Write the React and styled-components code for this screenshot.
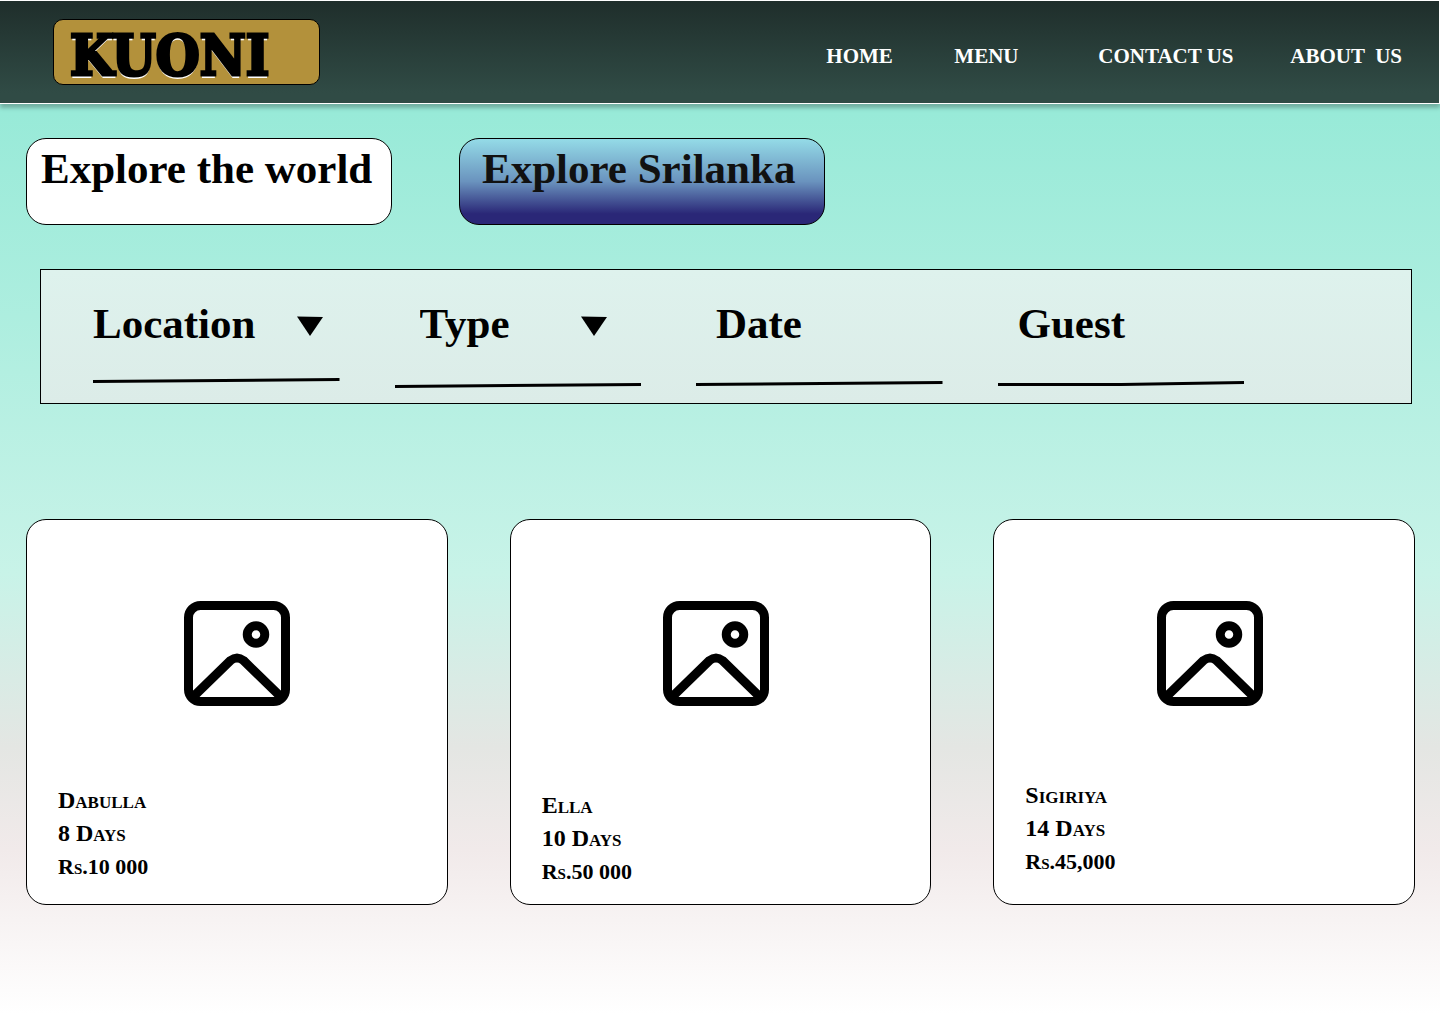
import React from "react";
import styled, { createGlobalStyle } from "styled-components";

const GlobalStyle = createGlobalStyle`
  *, *::before, *::after { box-sizing: border-box; }
  body {
    margin: 0;
    font-family: "Liberation Serif", serif;
    color: #000;
  }
`;

const Page = styled.div`
  min-height: 100vh;
  background: linear-gradient(
    180deg,
    #8fe9d5 0%,
    #98ead8 11%,
    #c8f3e8 56%,
    #e4e6e3 73%,
    #f1eaea 83%,
    #ffffff 99%
  );
`;

const Header = styled.header`
  display: flex;
  align-items: center;
  justify-content: space-between;
  height: 104px;
  padding: 2px 37px 0 53px;
  border: solid #fff;
  border-width: 1px 1px 1px 0;
  background: linear-gradient(180deg, #1f2e2b 0%, #304b45 90%);
  box-shadow: 0 4px 4px rgba(0, 0, 0, 0.25);
`;

const Logo = styled.a`
  display: flex;
  align-items: center;
  width: 267px;
  height: 66px;
  margin-bottom: 2px;
  padding: 6px 16px 0;
  border: 1px solid #000;
  border-radius: 10px;
  background: #b3913b;
  color: #000;
  font: bold 56px/56px "DejaVu Serif Condensed", "DejaVu Serif", serif;
  text-decoration: none;
  text-shadow: 0 3px 0 #fff;
  -webkit-text-stroke: 3px #000;
`;

const Nav = styled.nav`
  display: grid;
  grid-template-columns: 128px 144px 192px auto;
  padding-top: 6px;
`;

const NavLink = styled.a`
  color: #fff;
  font-size: 21px;
  line-height: 28px;
  font-weight: bold;
  text-decoration: none;
  white-space: pre;
`;

const Main = styled.main`
  padding: 34px 25px 119px 26px;
`;

const Tabs = styled.div`
  display: flex;
  gap: 67px;
`;

const Tab = styled.button`
  display: flex;
  align-items: flex-start;
  width: 366px;
  height: 87px;
  padding: 6px ${(p) => p.$inset}px;
  border: 1px solid #000;
  border-radius: 20px;
  background: ${(p) => p.$fill};
  color: ${(p) => p.$ink};
  font: bold 43px/48px "Liberation Serif", serif;
  white-space: nowrap;
  cursor: pointer;
`;

const SearchBar = styled.form`
  display: grid;
  grid-template-columns: repeat(4, 1fr);
  gap: 55px;
  margin: 44px 3px 0 14px;
  padding: 28px 167px 15px 52px;
  border: 1px solid #000;
  background: linear-gradient(180deg, #def2ed 0%, #dcece8 100%);
`;

const Field = styled.div`
  display: flex;
  flex-direction: column;
  min-width: 0;
`;

const FieldRow = styled.div`
  display: grid;
  align-items: center;
  height: 80px;
  padding-bottom: 28px;

  > * {
    grid-area: 1 / 1;
  }
`;

const controlText = `
  width: 100%;
  height: 52px;
  border: 0;
  outline-offset: 2px;
  background: transparent;
  color: #000;
  font: bold 43px/52px "Liberation Serif", serif;
`;

const Select = styled.select`
  ${controlText}
  appearance: none;
  padding: 0 0 0 ${(p) => p.$inset}px;
  cursor: pointer;
`;

const Input = styled.input`
  ${controlText}
  padding: 0 0 0 ${(p) => p.$inset}px;

  &::placeholder {
    color: #000;
    opacity: 1;
  }
`;

const Arrow = styled.svg`
  justify-self: end;
  width: 26px;
  height: 20px;
  margin: 4px ${(p) => p.$end}px 0 0;
  pointer-events: none;
`;

const Underline = styled.svg`
  display: block;
  width: 100%;
  height: 10px;
`;

const Cards = styled.section`
  display: grid;
  grid-template-columns: repeat(3, 1fr);
  gap: 62px;
  margin-top: 115px;
`;

const Card = styled.article`
  height: 386px;
  padding: 81px 31px 0;
  border: 1px solid #000;
  border-radius: 20px;
  background: #fff;
`;

const Picture = styled.svg`
  display: block;
  width: 106px;
  height: 106px;
  margin-left: ${(p) => p.$start}px;
`;

const Details = styled.div`
  padding-top: ${(p) => p.$top}px;
  font-size: 24px;
  line-height: 33px;
  font-weight: bold;
  font-variant: small-caps;
`;

const Name = styled.h2`
  margin: 0;
  font: inherit;
`;

const Days = styled.p`
  margin: 0;
`;

const Price = styled.p`
  margin: 0;
  font-size: 22px;
`;

const links = ["HOME", "MENU", "CONTACT US", "ABOUT  US"];

const fields = [
  { name: "Location", kind: "select", inset: 0, end: 17, line: "0,3.5 246,1.5" },
  { name: "Type", kind: "select", inset: 25, end: 34, line: "0,8.5 246,6.5" },
  { name: "Date", kind: "input", inset: 20, line: "0,6.5 246,4.5" },
  { name: "Guest", kind: "input", inset: 20, line: "0,6.5 123,6.5 246,4.5" },
];

const trips = [
  { name: "Dabulla", days: "8 Days", price: "Rs.10 000", start: 126, top: 77 },
  { name: "Ella", days: "10 Days", price: "Rs.50 000", start: 121, top: 82 },
  { name: "Sigiriya", days: "14 Days", price: "Rs.45,000", start: 132, top: 72 },
];

function SearchField({ name, kind, inset, end, line }) {
  return (
    <Field>
      <FieldRow>
        {kind === "select" ? (
          <>
            <Select aria-label={name} $inset={inset}>
              <option>{name}</option>
            </Select>
            <Arrow $end={end} viewBox="0 0 26 20" aria-hidden="true">
              <path d="M0 0.5L26 1L13 20Z" fill="#000" />
            </Arrow>
          </>
        ) : (
          <Input type="text" aria-label={name} placeholder={name} $inset={inset} />
        )}
      </FieldRow>
      <Underline viewBox="0 0 246 10" preserveAspectRatio="none" aria-hidden="true">
        <polyline points={line} fill="none" stroke="#000" strokeWidth="3" />
      </Underline>
    </Field>
  );
}

function PictureIcon({ start }) {
  return (
    <Picture
      $start={start}
      viewBox="0 0 106 106"
      fill="none"
      stroke="#000"
      strokeWidth="9"
      aria-hidden="true"
    >
      <rect x="4.5" y="4.5" width="97" height="96" rx="12" />
      <circle cx="72" cy="33.5" r="8.75" />
      <path d="M9 96L46.5 59.5Q53 54.5 59.5 59.5L97 96" />
    </Picture>
  );
}

export default function App() {
  return (
    <Page>
      <GlobalStyle />
      <Header>
        <Logo href="#">KUONI</Logo>
        <Nav>
          {links.map((text) => (
            <NavLink key={text} href="#">{text}</NavLink>
          ))}
        </Nav>
      </Header>
      <Main>
        <Tabs>
          <Tab type="button" $inset={14} $fill="#fff" $ink="#000">
            Explore the world
          </Tab>
          <Tab
            type="button"
            $inset={22}
            $fill="linear-gradient(180deg, #94dbe7 0%, #6a93be 50%, #2a2777 88%)"
            $ink="#111"
          >
            Explore Srilanka
          </Tab>
        </Tabs>
        <SearchBar>
          {fields.map((field) => (
            <SearchField key={field.name} {...field} />
          ))}
        </SearchBar>
        <Cards>
          {trips.map((trip) => (
            <Card key={trip.name}>
              <PictureIcon start={trip.start} />
              <Details $top={trip.top}>
                <Name>{trip.name}</Name>
                <Days>{trip.days}</Days>
                <Price>{trip.price}</Price>
              </Details>
            </Card>
          ))}
        </Cards>
      </Main>
    </Page>
  );
}
